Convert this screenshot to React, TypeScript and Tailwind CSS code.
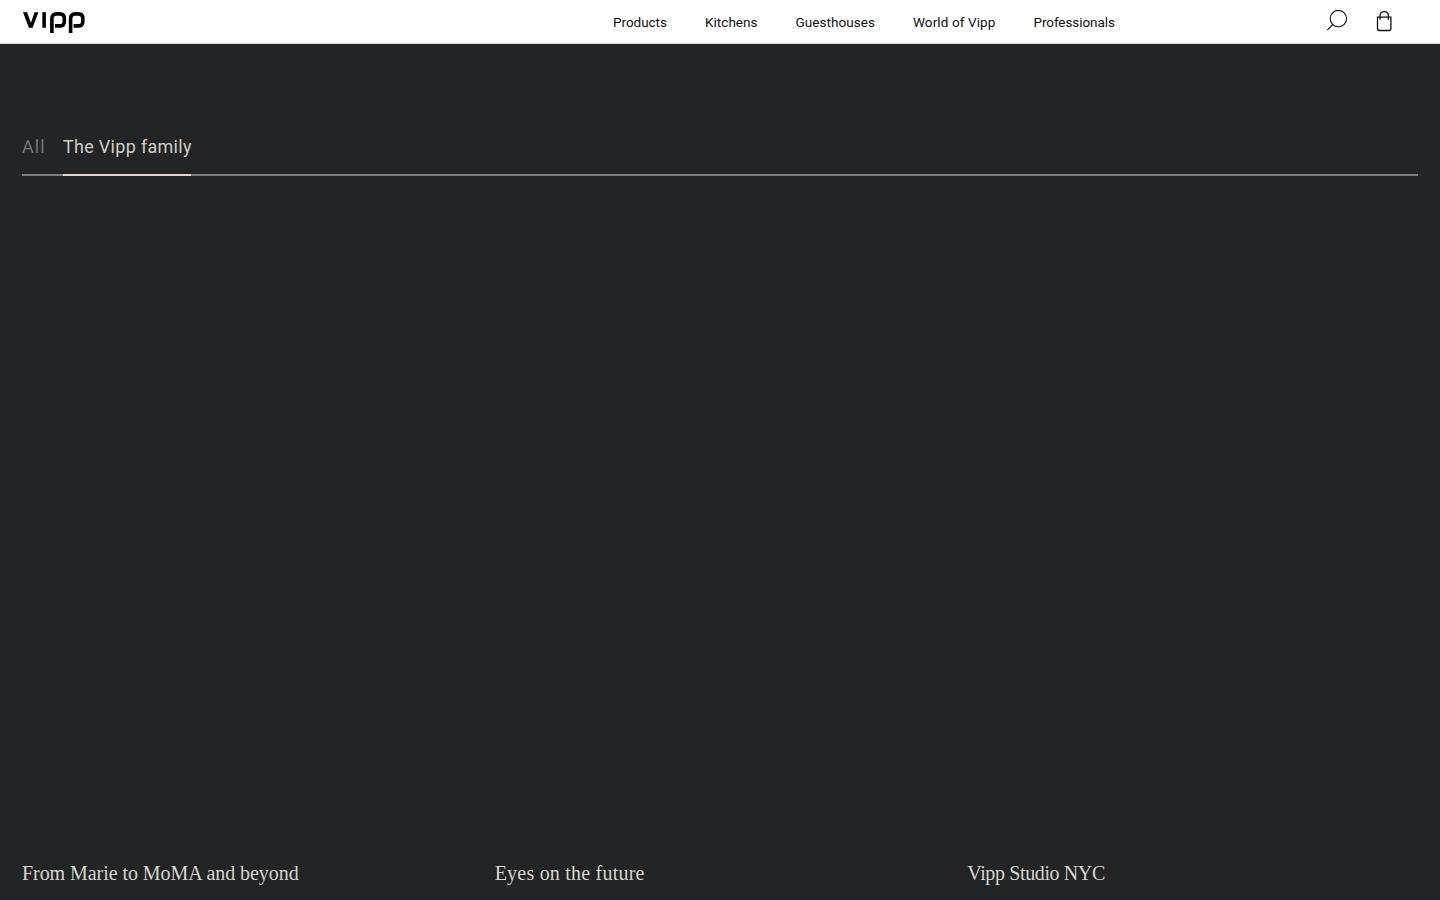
const navLinks = [
  { label: 'Products', className: 'w-[54px] tracking-[-0.03px]' },
  { label: 'Kitchens', className: 'w-[52.5px] tracking-[0.04px]' },
  { label: 'Guesthouses', className: 'w-[79.5px] tracking-[0.05px]' },
  { label: 'World of Vipp', className: 'w-[82.5px] tracking-[0.1px]' },
  { label: 'Professionals', className: 'w-[82px] tracking-[-0.08px]' },
];

const stories = [
  { title: 'From Marie to MoMA and beyond', className: 'tracking-[-0.06px]' },
  { title: 'Eyes on the future', className: 'tracking-[0.22px]' },
  { title: 'Vipp Studio NYC', className: 'tracking-[-0.38px]' },
];

const Logo: React.FC = () => (
  <svg width="64" height="24" viewBox="0 0 64 24" fill="none" stroke="#000" strokeWidth="3.6">
    <path d="M1 2.2h4.1l3.8 10.6 3.7-10.6h3.8l-5.8 15.5H6.9L1 2.2Z" fill="#000" stroke="none" />
    <path d="M22.1 2.2v15.5" />
    <path d="M29.9 23V8.6q0-4.7 4.7-4.7h3.2q4.5 0 4.5 4.6v2.9q0 4.5-4.5 4.5h-4.9" />
    <path d="M48.6 23V8.6q0-4.7 4.7-4.7h3q4.5 0 4.5 4.6v2.9q0 4.5-4.5 4.5h-4.7" />
  </svg>
);

const Header: React.FC = () => (
  <header className="flex h-11 items-center border-b border-[#d9dada] bg-white pl-[22px]">
    <a href="#" aria-label="Vipp" className="w-[591px]">
      <Logo />
    </a>
    <nav>
      <ul className="flex gap-[38px] text-[13.5px] leading-5 text-[#111]">
        {navLinks.map((link) => (
          <li key={link.label} className={`whitespace-nowrap ${link.className}`}>
            <a href="#">{link.label}</a>
          </li>
        ))}
      </ul>
    </nav>
    <div className="mr-[46px] ml-auto flex gap-[26px]">
      <button aria-label="Search">
        <svg width="24" height="24" viewBox="0 0 24 24" fill="none" stroke="#111" strokeWidth="1.1">
          <circle cx="14.4" cy="8.6" r="8.2" />
          <path d="M8.7 14.5 3.3 20.2" />
        </svg>
      </button>
      <button aria-label="Bag">
        <svg width="20" height="24" viewBox="0 0 20 24" fill="none" stroke="#111" strokeWidth="1.3">
          <path d="M3.5 7.2h13.4v11.6q0 1.7-1.7 1.7h-10q-1.7 0-1.7-1.7V7.2Z" />
          <path d="M6.1 9.8V5.6q0-4 4.1-4t4.1 4v4.2" />
        </svg>
      </button>
    </div>
  </header>
);

const App: React.FC = () => {
  return (
    <div className="flex h-screen flex-col overflow-hidden bg-[#222425] font-['Roboto',sans-serif] antialiased">
      <Header />
      <main className="flex flex-1 flex-col px-[22px] pt-[91px]">
        <div className="flex h-[41px] gap-[18px] border-b-2 border-[#7c7e7f] text-lg leading-6">
          <button className="-mb-0.5 flex w-[23px] items-start tracking-[1.1px] text-[#747678]">
            All
          </button>
          <button className="-mb-0.5 flex w-32 items-start border-b-2 border-[#d9d4c5] tracking-[0.3px] whitespace-nowrap text-[#cfcdc6]">
            The Vipp family
          </button>
        </div>
        <div className="mt-auto grid grid-cols-3 gap-[22px] pb-[13px] font-['Liberation_Serif',serif] text-xl leading-7 text-[#d6d5d0]">
          {stories.map((story) => (
            <h2 key={story.title} className={story.className}>
              {story.title}
            </h2>
          ))}
        </div>
      </main>
    </div>
  );
};

export default App;
